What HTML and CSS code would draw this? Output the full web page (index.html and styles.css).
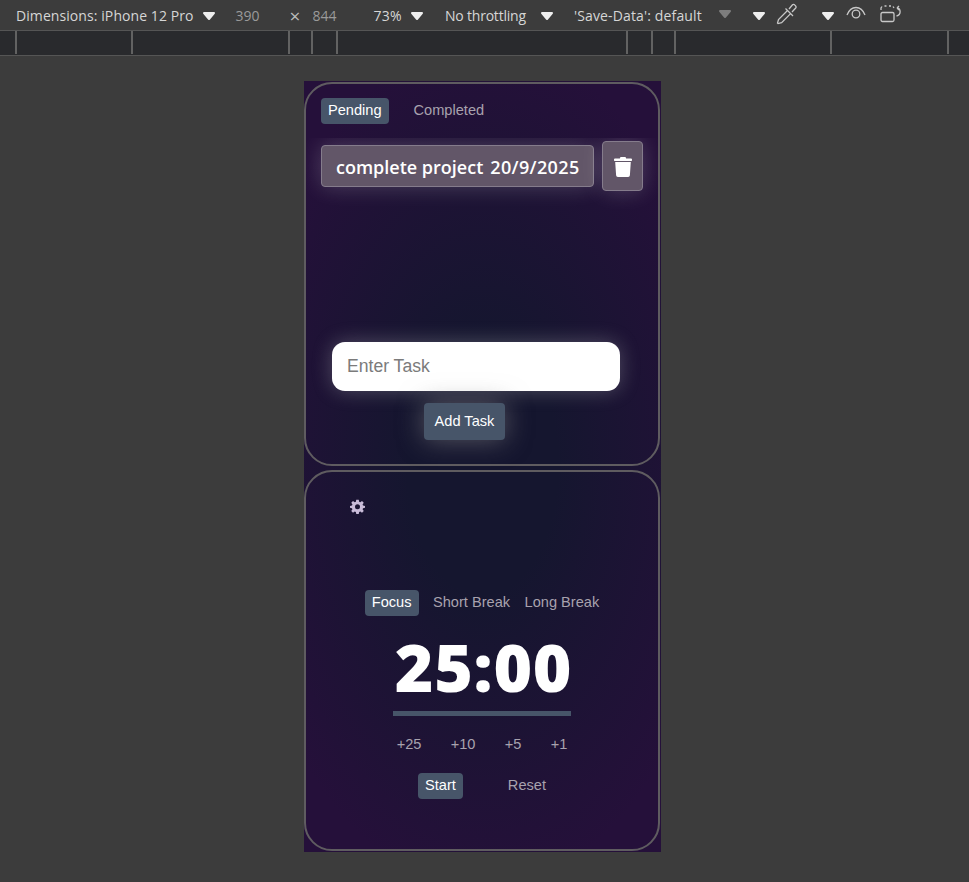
FILE: index.html
```html
<!DOCTYPE html>
<html lang="en">
<head>
	<meta charset="UTF-8">
	<title>Tasks and Timer</title>
	<link rel="stylesheet" href="styles.css">
</head>
<body>
<div class="toolbar">
	<span class="dims">Dimensions: iPhone 12 Pro</span>
	<svg class="arrow a1" width="14" height="10" viewBox="0 0 14 10"><path d="M2 2h10L7 8z"/></svg>
	<span class="num n1">390</span>
	<span class="times">×</span>
	<span class="num n2">844</span>
	<span class="zoom">73%</span>
	<svg class="arrow a2" width="14" height="10" viewBox="0 0 14 10"><path d="M2 2h10L7 8z"/></svg>
	<span class="thr">No throttling</span>
	<svg class="arrow a3" width="14" height="10" viewBox="0 0 14 10"><path d="M2 2h10L7 8z"/></svg>
	<span class="save">'Save-Data': default</span>
	<svg class="arrow a4 dim" width="14" height="10" viewBox="0 0 14 10"><path d="M2 2h10L7 8z"/></svg>
	<svg class="arrow a5" width="14" height="10" viewBox="0 0 14 10"><path d="M2 2h10L7 8z"/></svg>
	<svg class="ico dropper" width="22" height="22" viewBox="0 0 22 22" fill="none" stroke="#c8c8c8" stroke-width="1.300"><path d="M11.500 7.500 2.500 16.500l-1 3.500 .6 .6 3.500-1 9-9"/><path d="M9.500 5.500l7.500 7.500"/><path d="M13 6l3.500-4.200c1.500-1.300 4.500 1.700 3.200 3.200L16 9"/></svg>
	<svg class="arrow a6" width="14" height="10" viewBox="0 0 14 10"><path d="M2 2h10L7 8z"/></svg>
	<svg class="ico eye" width="20" height="13" viewBox="0 0 20 13" fill="none" stroke="#c8c8c8" stroke-width="1.300"><path d="M1 9c4-10 14-10 18 0"/><circle cx="10" cy="8" r="3.800"/></svg>
	<svg class="ico rot" width="22" height="18" viewBox="0 0 22 18" fill="none" stroke="#c8c8c8" stroke-width="1.300"><rect x="1" y="7.500" width="13" height="9" rx="1.500"/><path d="M1 5V3l1-1.500M4.500 1h2M9 1h2M13 1.500l1 1.500"/><path d="M17 3c4 .5 4.500 7-.5 8M17 3l2-2M17 3l2 2"/></svg>
</div>
<div class="ruler">
	<i style="left:15px"></i><i style="left:131px"></i><i style="left:288px"></i><i style="left:311px"></i><i style="left:336px"></i>
	<i style="left:626px"></i><i style="left:651px"></i><i style="left:674px"></i><i style="left:830px"></i><i style="left:947px"></i>
</div>
<div class="stage">
	<div class="phone">
		<section class="panel todo">
			<div class="tabs">
				<button class="tab on">Pending</button>
				<button class="tab">Completed</button>
			</div>
			<div class="tasklist">
				<div class="task">complete project<span class="date">20/9/2025</span></div>
				<button class="del">
					<svg width="18" height="20" viewBox="0 0 18 20" fill="#fff"><path d="M6.500 0h5l.7 1.500H17a1 1 0 0 1 1 1v.8a.6.6 0 0 1-.6.6H.6A.6.6 0 0 1 0 3.300v-.8a1 1 0 0 1 1-1h4.800zM1.200 5h15.600l-.9 13.300A1.800 1.800 0 0 1 14.100 20H3.900a1.800 1.800 0 0 1-1.800-1.700z"/></svg>
				</button>
			</div>
			<div class="addform">
				<input class="taskinput" type="text" placeholder="Enter Task">
				<button class="addbtn">Add Task</button>
			</div>
		</section>
		<section class="panel timer">
			<svg class="gear" width="15" height="15" viewBox="0 0 24 24"><path fill="#c9bcd9" fill-rule="evenodd" d="M10 1h4l.6 3.200 1.900.8L19.200 3.100 22 5.900l-1.900 2.700.8 1.900L24 11v3l-3.100.6-.8 1.900 1.900 2.700-2.800 2.800-2.700-1.900-1.900.8L14 24h-4l-.6-3.100-1.900-.8-2.700 1.900L2 19.200l1.900-2.700-.8-1.900L0 14v-3l3.100-.5.8-1.900L2 5.900l2.800-2.800 2.700 1.900 1.900-.8zM12 8.500a4 4 0 1 0 0 8 4 4 0 0 0 0-8z"/></svg>
			<div class="modes">
				<button class="tab on">Focus</button>
				<button class="tab">Short Break</button>
				<button class="tab">Long Break</button>
			</div>
			<div class="clock">25:00</div>
			<div class="bar"></div>
			<div class="adds">
				<span>+25</span><span>+10</span><span>+5</span><span>+1</span>
			</div>
			<div class="controls">
				<button class="tab on">Start</button>
				<button class="tab">Reset</button>
			</div>
		</section>
	</div>
</div>
</body>
</html>
```

FILE: styles.css
```css
* {
	box-sizing: border-box;
}
html, body {
	height: 100%;
}
body {
	margin: 0;
	background: #3c3c3c;
	font-family: "Liberation Sans", Arial, sans-serif;
	overflow: hidden;
}
button {
	font-family: inherit;
	border: 0;
	padding: 0;
	background: none;
}

/* devtools bar */
.toolbar {
	display: flex;
	align-items: center;
	height: 30px;
	font-family: "Open Sans", sans-serif;
	font-size: 14px;
	color: #d6d6d6;
	white-space: nowrap;
}
.dims { margin-left: 16px; letter-spacing: .08px; }
.num { color: #9a9a9a; }
.n1 { margin-left: 20px; }
.times { margin-left: 30px; margin-top: 2px; font-size: 19px; line-height: 20px; color: #bbb; }
.n2 { margin-left: 12px; }
.zoom { margin-left: 37px; letter-spacing: .3px; }
.thr { margin-left: 21px; letter-spacing: -.2px; }
.save { margin-left: 20px; letter-spacing: .15px; }
.arrow {
	display: block;
	margin-left: 8px;
	margin-top: 1px;
}
.arrow path {
	fill: #eee;
	stroke: #eee;
	stroke-width: 2;
	stroke-linejoin: round;
}
.arrow.dim path {
	fill: #7d7d7d;
	stroke: #7d7d7d;
}
.a3 { margin-left: 14px; }
.a4 { margin-left: 16px; margin-top: -2px; }
.a5 { margin-left: 20px; }
.a6 { margin-left: 23px; }
.ico { display: block; }
.dropper { margin-left: 10px; margin-top: -3px; }
.eye { margin-left: 11px; margin-top: -5px; }
.rot { margin-left: 14px; margin-top: -2px; }

.ruler {
	position: relative;
	height: 26px;
	background: #292a2d;
	border-top: 1px solid #555;
	border-bottom: 1px solid #555;
}
.ruler i {
	position: absolute;
	top: 0;
	bottom: 1px;
	width: 2px;
	background: #626262;
}

.stage {
	display: flex;
	justify-content: center;
	padding: 25px 4px 0 0;
}
.phone {
	display: flex;
	flex-direction: column;
	gap: 4px;
	width: 357px;
	height: 771px;
	padding-top: 1px;
	background: radial-gradient(ellipse 70% 55% at 50% 50%, #15162f 30%, #25103a 100%);
}
.panel {
	border: 2px solid #5f5c60;
	border-radius: 28px;
	width: 356px;
}
.todo {
	display: flex;
	flex-direction: column;
	height: 384px;
	padding-top: 14px;
}
.timer {
	display: flex;
	flex-direction: column;
	align-items: center;
	height: 381px;
}

.tab {
	height: 26px;
	padding-bottom: 2px;
	border-radius: 4px;
	font-size: 14.600px;
	color: #a8a2ae;
}
.tab.on {
	padding: 0 7px 2px;
	background: #475569;
	color: #fff;
}
.tabs {
	display: flex;
	gap: 25px;
	padding-left: 15px;
}
.tasklist {
	display: flex;
	align-items: center;
	gap: 8px;
	margin-top: 14px;
	padding: 3px 15px 24px;
	overflow: hidden;
}
.task {
	display: flex;
	align-items: center;
	gap: 7px;
	width: 273px;
	height: 42px;
	padding: 2px 0 0 14px;
	background: #625668;
	border: 1px solid #857c8c;
	border-radius: 4px;
	box-shadow: 0 0 22px rgba(255, 255, 255, .2);
	font-family: "Open Sans", sans-serif;
	font-weight: 600;
	font-size: 18px;
	color: #fff;
}
.date {
	letter-spacing: .35px;
}
.del {
	display: flex;
	align-items: center;
	justify-content: center;
	width: 41px;
	height: 50px;
	padding-top: 2px;
	background: #625668;
	border: 1px solid #857c8c;
	border-radius: 4px;
	box-shadow: 0 0 22px rgba(255, 255, 255, .2);
}

.addform {
	display: flex;
	flex-direction: column;
	align-items: center;
	margin-top: 127px;
}
.taskinput {
	width: 288px;
	height: 49px;
	margin-right: 12px;
	padding: 0 15px;
	border: 0;
	border-radius: 13px;
	background: #fff;
	box-shadow: 0 0 20px rgba(210, 210, 210, .3);
	font-family: "Liberation Sans", Arial, sans-serif;
	font-size: 17.600px;
}
.taskinput::placeholder {
	color: #7b7b7b;
}
.addbtn {
	width: 81px;
	height: 37px;
	margin-top: 12px;
	margin-right: 35px;
	padding-bottom: 2px;
	border-radius: 4px;
	background: #475569;
	box-shadow: 0 0 26px rgba(130, 130, 130, .6);
	color: #fff;
	font-size: 14.600px;
}

.gear {
	align-self: flex-start;
	margin: 27px 0 0 44px;
}
.modes {
	display: flex;
	align-items: center;
	gap: 14.500px;
	margin-top: 76px;
}
.clock {
	margin: 10px 0 0 3px;
	font-family: "Open Sans", sans-serif;
	font-weight: 800;
	font-size: 66px;
	line-height: 80px;
	letter-spacing: .7px;
	color: #fff;
}
.bar {
	width: 178px;
	height: 5px;
	margin-top: 5px;
	background: #475569;
}
.adds {
	display: flex;
	gap: 29.300px;
	margin-top: 20px;
	font-size: 14.600px;
	color: #a8a2ae;
}
.controls {
	display: flex;
	gap: 45px;
	margin-top: 21px;
}
```
